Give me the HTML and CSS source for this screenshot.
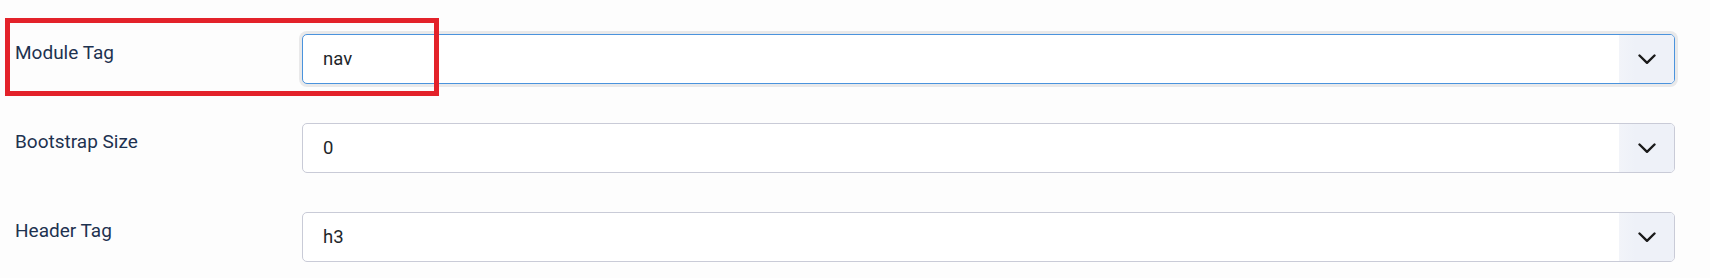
FILE: index.html
```html
<!DOCTYPE html>
<html lang="en">
<head>
<meta charset="utf-8">
<title>Module options</title>
<link rel="stylesheet" href="styles.css">
</head>
<body>
<div class="form">
  <div class="row">
    <div class="label">Module Tag</div>
    <div class="select focused">
      <span class="value">nav</span>
      <span class="caret"><svg width="18" height="11" viewBox="0 0 18 11"><path d="M1.5 1.5 L9 8.8 L16.5 1.5" fill="none" stroke="#1a1a1a" stroke-width="2.4" stroke-linecap="round" stroke-linejoin="round"/></svg></span>
    </div>
  </div>
  <div class="row">
    <div class="label">Bootstrap Size</div>
    <div class="select">
      <span class="value">0</span>
      <span class="caret"><svg width="18" height="11" viewBox="0 0 18 11"><path d="M1.5 1.5 L9 8.8 L16.5 1.5" fill="none" stroke="#1a1a1a" stroke-width="2.4" stroke-linecap="round" stroke-linejoin="round"/></svg></span>
    </div>
  </div>
  <div class="row">
    <div class="label">Header Tag</div>
    <div class="select">
      <span class="value">h3</span>
      <span class="caret"><svg width="18" height="11" viewBox="0 0 18 11"><path d="M1.5 1.5 L9 8.8 L16.5 1.5" fill="none" stroke="#1a1a1a" stroke-width="2.4" stroke-linecap="round" stroke-linejoin="round"/></svg></span>
    </div>
  </div>
  <div class="highlight"></div>
</div>
</body>
</html>
```
FILE: styles.css
```css
html, body {
  margin: 0;
  padding: 0;
  background: #fdfdfd;
}
body {
  font-family: Roboto, "Liberation Sans", sans-serif;
  width: 1710px;
  height: 278px;
  overflow: hidden;
}
.form {
  position: relative;
  padding: 34px 35px 0 15px;
  display: flex;
  flex-direction: column;
  gap: 39px;
}
.row {
  display: flex;
  align-items: flex-start;
}
.label {
  width: 287px;
  flex: none;
  padding-top: 7px;
  font-size: 19px;
  line-height: 24px;
  color: #1d3250;
}
.select {
  flex: 1;
  height: 50px;
  box-sizing: border-box;
  display: flex;
  align-items: center;
  border: 1px solid #c9cbd7;
  border-radius: 5px;
  background: #ffffff;
  overflow: hidden;
}
.select.focused {
  border-color: #4a93dd;
  box-shadow: 0 0 0 3px #e9e9ea;
}
.value {
  flex: 1;
  padding-left: 20px;
  font-size: 18.5px;
  color: #22262a;
}
.caret {
  width: 55px;
  align-self: stretch;
  display: flex;
  align-items: center;
  justify-content: center;
  background: linear-gradient(90deg, #f2f4f9, #eef1f8 30%);
}
.caret svg {
  display: block;
  margin-left: 1px;
}
.highlight {
  position: absolute;
  left: 5px;
  top: 18px;
  width: 434px;
  height: 78px;
  box-sizing: border-box;
  border: 5px solid #e3222a;
  pointer-events: none;
}
```
